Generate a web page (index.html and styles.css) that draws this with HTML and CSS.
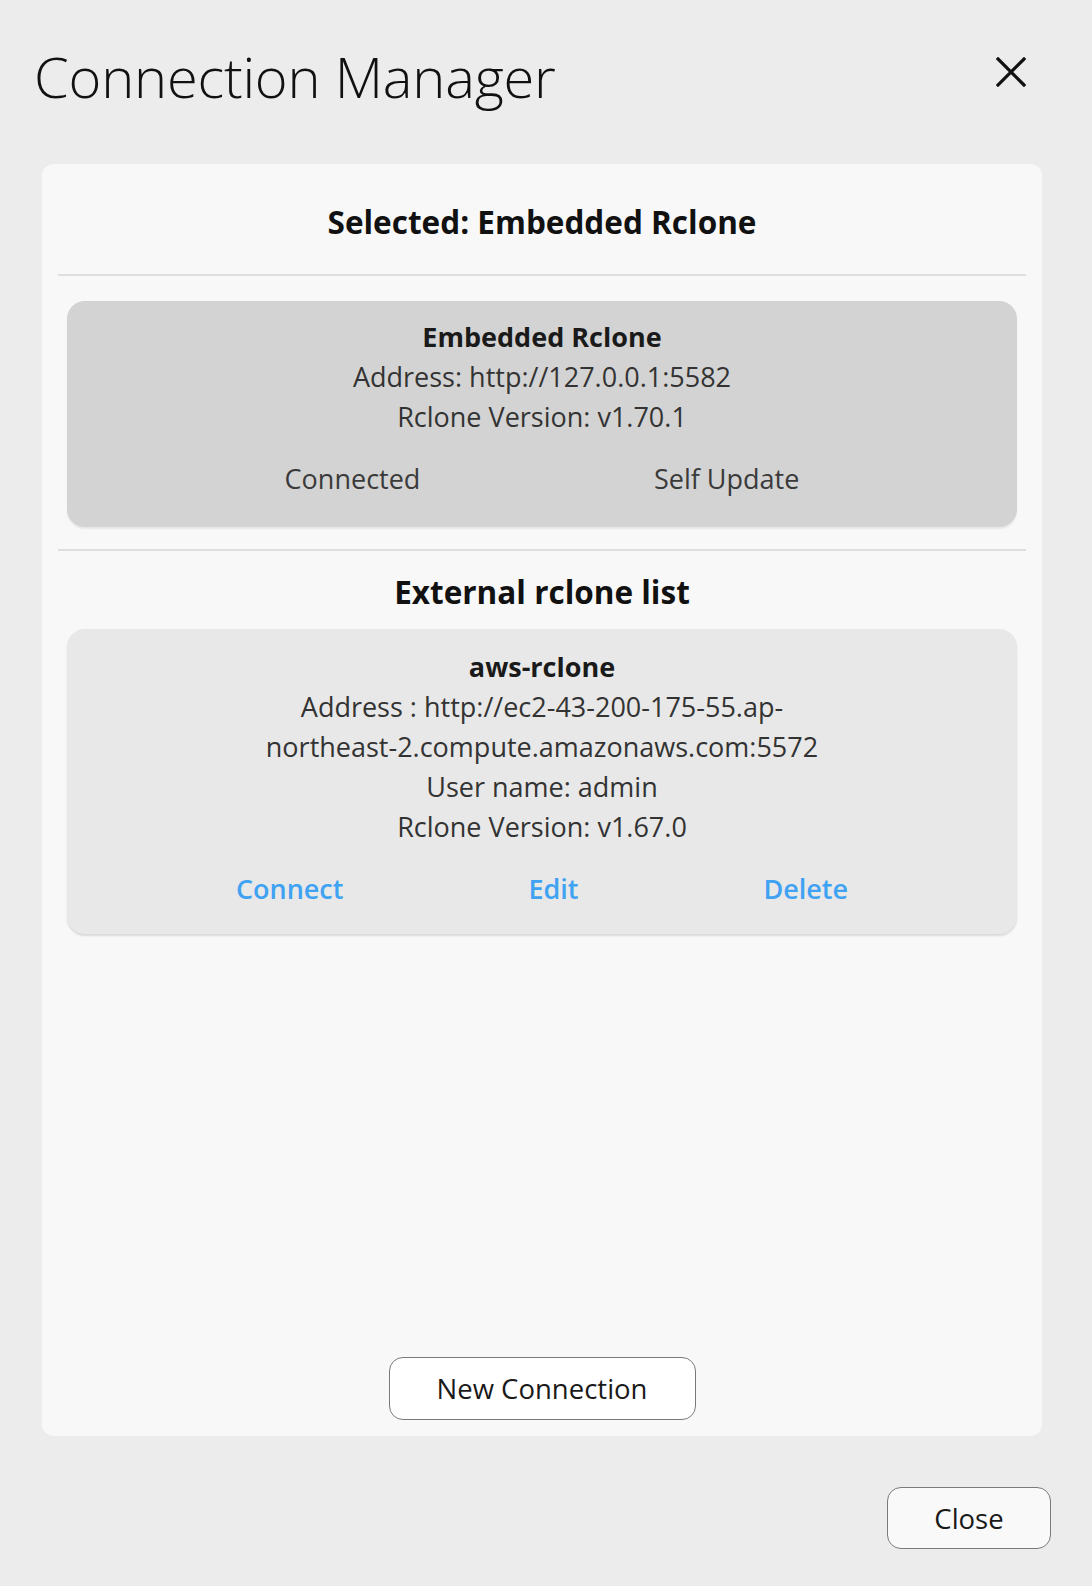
FILE: index.html
```html
<!DOCTYPE html>
<html>
<head>
<meta charset="utf-8">
<link rel="stylesheet" href="styles.css">
</head>
<body>
<div class="dialog">
  <header class="head">
    <h1 class="title">Connection Manager</h1>
    <button class="x-btn" aria-label="close">
      <svg width="30" height="30" viewBox="0 0 30 30"><path d="M2 2 L28 28 M28 2 L2 28" stroke="#111" stroke-width="3.2" stroke-linecap="square" fill="none"/></svg>
    </button>
  </header>
  <main class="panel">
    <div class="sel-title">Selected: Embedded Rclone</div>
    <div class="divider d1"></div>
    <section class="card card-active">
      <div class="name">Embedded Rclone</div>
      <div class="line">Address: http://127.0.0.1:5582</div>
      <div class="line">Rclone Version: v1.70.1</div>
      <div class="actions a1">
        <span class="act gray">Connected</span>
        <span class="act gray">Self Update</span>
      </div>
    </section>
    <div class="divider d2"></div>
    <div class="list-title">External rclone list</div>
    <section class="card card-ext">
      <div class="name">aws-rclone</div>
      <div class="line">Address : http://ec2-43-200-175-55.ap-<br>northeast-2.compute.amazonaws.com:5572</div>
      <div class="line">User name: admin</div>
      <div class="line">Rclone Version: v1.67.0</div>
      <div class="actions a2">
        <span class="act blue">Connect</span>
        <span class="act blue">Edit</span>
        <span class="act blue">Delete</span>
      </div>
    </section>
    <div class="bottom">
      <button class="btn new-btn">New Connection</button>
    </div>
  </main>
  <footer class="foot">
    <button class="btn close-btn">Close</button>
  </footer>
</div>
</body>
</html>
```
FILE: styles.css
```css
* { box-sizing: border-box; }
html, body { margin: 0; padding: 0; }
body {
  background: #ececec;
  font-family: "Open Sans", "Noto Sans", sans-serif;
  color: #222;
  width: 1092px;
  height: 1586px;
  overflow: hidden;
}
.dialog {
  display: flex;
  flex-direction: column;
  height: 1586px;
}
.head {
  display: flex;
  align-items: flex-start;
  justify-content: space-between;
  padding: 42px 66px 0 34px;
  height: 164px;
}
.title {
  margin: 0;
  font-weight: 300;
  font-size: 56px;
  line-height: 68px;
  color: #111;
  letter-spacing: -0.2px;
}
.x-btn {
  background: none;
  border: 0;
  padding: 0;
  margin-top: 15px;
  width: 30px;
  height: 30px;
}
.x-btn svg { display: block; }
.panel {
  margin-left: 42px;
  width: 1000px;
  height: 1272px;
  background: #f8f8f8;
  border-radius: 12px;
  padding: 38px 16px 16px;
  display: flex;
  flex-direction: column;
}
.sel-title, .list-title {
  text-align: center;
  font-weight: 700;
  font-size: 31.5px;
  line-height: 40px;
  color: #111;
}
.divider {
  height: 2px;
  background: #dedede;
}
.d1 { margin-top: 32px; }
.d2 { margin-top: 22px; }
.list-title { margin-top: 21px; }
.card {
  margin: 25px 9px 0;
  border-radius: 18px;
  text-align: center;
  color: #333;
  font-size: 27px;
  line-height: 40px;
}
.card-active {
  background: #d3d3d3;
  padding: 16px 0 28px;
  box-shadow: 0 2px 2px rgba(0,0,0,0.07);
}
.card-ext {
  margin-top: 17px;
  background: #e8e8e8;
  padding: 18px 0 25px;
  box-shadow: 0 2px 2px rgba(0,0,0,0.12);
}
.name {
  font-weight: 700;
  color: #1a1a1a;
}
.actions {
  display: flex;
  justify-content: space-evenly;
}
.a1 { margin-top: 22px; }
.a2 { margin-top: 22px; }
.act {
  padding: 0 16px;
}
.gray { color: #3a3a3a; }
.blue { color: #3fa2f2; font-weight: 600; }
.bottom {
  margin-top: auto;
  display: flex;
  justify-content: center;
}
.btn {
  font-family: "Open Sans", "Noto Sans", sans-serif;
  font-size: 27.5px;
  color: #1a1a1a;
  background: #fff;
  border: 1.5px solid #7a7a7a;
  border-radius: 14px;
}
.new-btn {
  width: 307px;
  height: 63px;
}
.foot {
  display: flex;
  justify-content: flex-end;
  padding: 51px 41px 0 0;
}
.close-btn {
  width: 164px;
  height: 62px;
  background: #f9f9f9;
}
```
